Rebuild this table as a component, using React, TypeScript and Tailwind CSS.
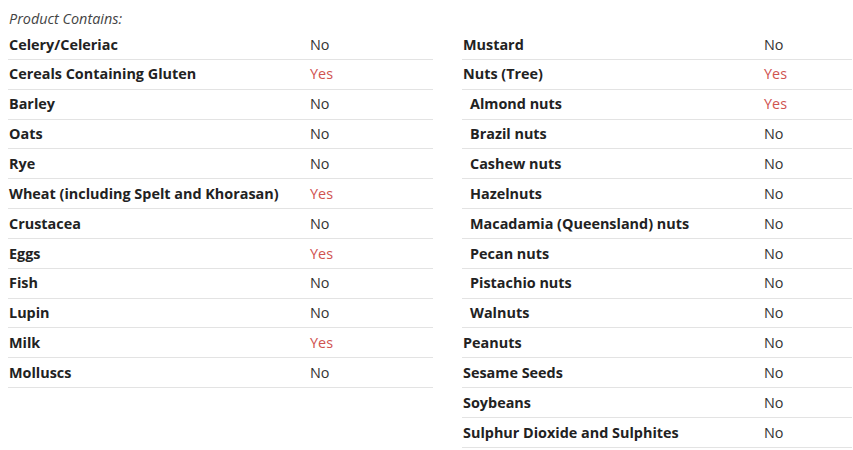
import React from 'react';

type Row = { name: string; value: 'Yes' | 'No'; sub?: boolean };

const left: Row[] = [
  { name: 'Celery/Celeriac', value: 'No' },
  { name: 'Cereals Containing Gluten', value: 'Yes' },
  { name: 'Barley', value: 'No' },
  { name: 'Oats', value: 'No' },
  { name: 'Rye', value: 'No' },
  { name: 'Wheat (including Spelt and Khorasan)', value: 'Yes' },
  { name: 'Crustacea', value: 'No' },
  { name: 'Eggs', value: 'Yes' },
  { name: 'Fish', value: 'No' },
  { name: 'Lupin', value: 'No' },
  { name: 'Milk', value: 'Yes' },
  { name: 'Molluscs', value: 'No' },
];

const right: Row[] = [
  { name: 'Mustard', value: 'No' },
  { name: 'Nuts (Tree)', value: 'Yes' },
  { name: 'Almond nuts', value: 'Yes', sub: true },
  { name: 'Brazil nuts', value: 'No', sub: true },
  { name: 'Cashew nuts', value: 'No', sub: true },
  { name: 'Hazelnuts', value: 'No', sub: true },
  { name: 'Macadamia (Queensland) nuts', value: 'No', sub: true },
  { name: 'Pecan nuts', value: 'No', sub: true },
  { name: 'Pistachio nuts', value: 'No', sub: true },
  { name: 'Walnuts', value: 'No', sub: true },
  { name: 'Peanuts', value: 'No' },
  { name: 'Sesame Seeds', value: 'No' },
  { name: 'Soybeans', value: 'No' },
  { name: 'Sulphur Dioxide and Sulphites', value: 'No' },
];

const AllergenTable = ({ rows }: { rows: Row[] }) => (
  <div className="flex flex-col">
    {rows.map(r => (
      <div key={r.name} className="flex items-center h-[29.85px] border-b border-[#e3e3e3] text-[14.4px]">
        <div className={`w-[302px] shrink-0 font-bold text-[#222] ${r.sub ? 'pl-[8px]' : 'pl-px'}`}>{r.name}</div>
        <div className={r.value === 'Yes' ? 'text-[#d0534f]' : 'text-[#333]'}>{r.value}</div>
      </div>
    ))}
  </div>
);

export default function App() {
  return (
    <div className="w-[853px] h-[450px] bg-white pl-2 overflow-hidden" style={{ fontFamily: '"Open Sans", sans-serif' }}>
      <div className="h-[30px] pt-[8px] leading-[22px] text-[14.4px] italic text-[#444] pl-px">Product Contains:</div>
      <div className="flex gap-[29px] -mt-[30px]">
        <div className="w-[425px] shrink-0 pt-[30px]">
          <AllergenTable rows={left} />
        </div>
        <div className="w-[390px] shrink-0 pt-[30px]">
          <AllergenTable rows={right} />
        </div>
      </div>
    </div>
  );
}
